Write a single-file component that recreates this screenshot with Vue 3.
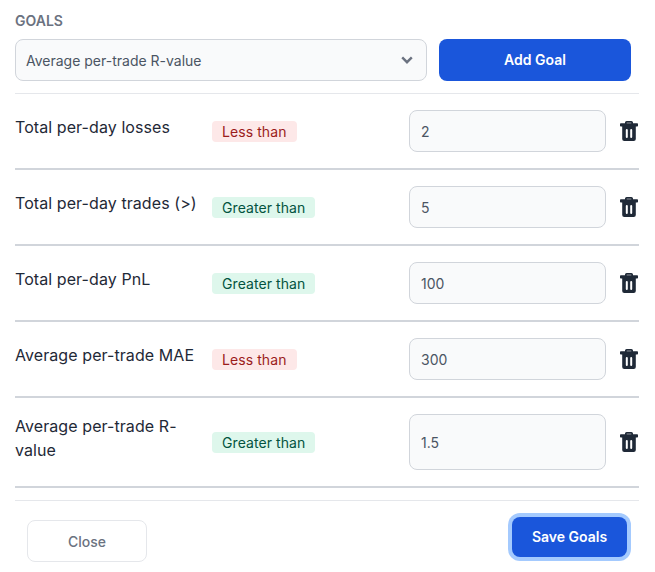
<script setup>
const goals = [
  { name: 'Total per-day losses', kind: 'less', op: 'Less than', value: '2' },
  { name: 'Total per-day trades (>)', kind: 'greater', op: 'Greater than', value: '5' },
  { name: 'Total per-day PnL', kind: 'greater', op: 'Greater than', value: '100' },
  { name: 'Average per-trade MAE', kind: 'less', op: 'Less than', value: '300' },
  { name: 'Average per-trade R-value', kind: 'greater', op: 'Greater than', value: '1.5' },
]
</script>

<template>
  <div class="panel">
    <div class="title">GOALS</div>
    <div class="adder">
      <div class="select">
        <span>Average per-trade R-value</span>
        <svg class="chev" viewBox="0 0 12 8" width="12" height="8" aria-hidden="true">
          <path d="M1.2 1.4 6 6.2l4.8-4.8" fill="none" stroke="#6b7280" stroke-width="2.4" />
        </svg>
      </div>
      <button class="primary add">Add Goal</button>
    </div>
    <div class="rows">
      <div v-for="g in goals" :key="g.name" class="row">
        <div class="name">{{ g.name }}</div>
        <div class="cell"><span class="badge" :class="g.kind">{{ g.op }}</span></div>
        <input class="val" :value="g.value" />
        <svg class="trash" viewBox="0 0 18 20" width="18" height="20" aria-hidden="true">
          <path fill="#1f2937" fill-rule="evenodd" d="M5 2.2V1.6A1.6 1.6 0 0 1 6.6 0h4.8A1.6 1.6 0 0 1 13 1.6v.6h4.2a.8.8 0 0 1 .8.8v1.7a.8.8 0 0 1-.8.8h-1.4v12.4a2.1 2.1 0 0 1-2.1 2.1H4.3a2.1 2.1 0 0 1-2.1-2.1V5.5H.8A.8.8 0 0 1 0 4.7V3a.8.8 0 0 1 .8-.8H5zm1.7 0h4.6V1.7H6.7v.5zM6.8 8a1 1 0 0 0-1 1v7a1 1 0 0 0 2 0V9a1 1 0 0 0-1-1zm4.4 0a1 1 0 0 0-1 1v7a1 1 0 0 0 2 0V9a1 1 0 0 0-1-1z" />
        </svg>
      </div>
    </div>
    <div class="footer">
      <button class="close">Close</button>
      <button class="primary save">Save Goals</button>
    </div>
  </div>
</template>

<style>
html, body { background: #fff; }
</style>

<style scoped>
.panel {
  width: 624px;
  margin-left: 15px;
  padding-top: 12px;
  font-family: Inter, "Noto Sans", sans-serif;
  color: #1f2937;
}
.title {
  font-size: 14px;
  line-height: 18px;
  font-weight: 600;
  color: #6b7280;
  margin-bottom: 9px;
}
.adder {
  display: flex;
  gap: 12px;
  padding-right: 8px;
  padding-bottom: 12px;
  border-bottom: 1px solid #e5e7eb;
}
.select {
  flex: 1;
  height: 42px;
  box-sizing: border-box;
  display: flex;
  align-items: center;
  justify-content: space-between;
  padding: 0 13px 0 10px;
  background: #f9fafb;
  border: 1px solid #d1d5db;
  border-radius: 8px;
  font-size: 14px;
  color: #4b5563;
}
.primary {
  border: 0;
  background: #1a56db;
  color: #fff;
  font: 600 14px/20px Inter, sans-serif;
  border-radius: 8px;
  padding: 0;
}
.add { width: 192px; height: 42px; }
.row {
  display: grid;
  grid-template-columns: 197px 197px 197px 33px;
  align-items: center;
  padding: 16px 0;
  border-bottom: 2px solid #d1d5db;
}
.name {
  font-size: 16px;
  line-height: 24px;
  letter-spacing: 0.08px;
  margin-bottom: 8px;
}
.cell { display: flex; padding-top: 1px; }
.badge {
  font-size: 14px;
  line-height: 21px;
  letter-spacing: 0.08px;
  padding: 0 10px;
  border-radius: 4px;
}
.less { background: #fde8e8; color: #9b1c1c; }
.greater { background: #def7ec; color: #03543f; }
.val {
  box-sizing: border-box;
  width: 197px;
  align-self: stretch;
  min-height: 42px;
  padding: 0 11px;
  background: #f9fafb;
  border: 1px solid #d1d5db;
  border-radius: 8px;
  font: 14px Inter, sans-serif;
  color: #4b5563;
  outline: none;
}
.trash { justify-self: end; margin-right: 1px; }
.footer {
  margin-top: 12px;
  border-top: 1px solid #e5e7eb;
  padding: 16px 12px 10px;
  display: flex;
  justify-content: space-between;
  align-items: flex-start;
}
.close {
  width: 120px;
  height: 42px;
  margin-top: 3px;
  background: #fff;
  border: 1px solid #e5e7eb;
  border-radius: 8px;
  color: #6b7280;
  font: 500 14px Inter, sans-serif;
}
.save {
  width: 115px;
  height: 40px;
  box-shadow: 0 0 0 4px #a4cafe;
}
</style>
